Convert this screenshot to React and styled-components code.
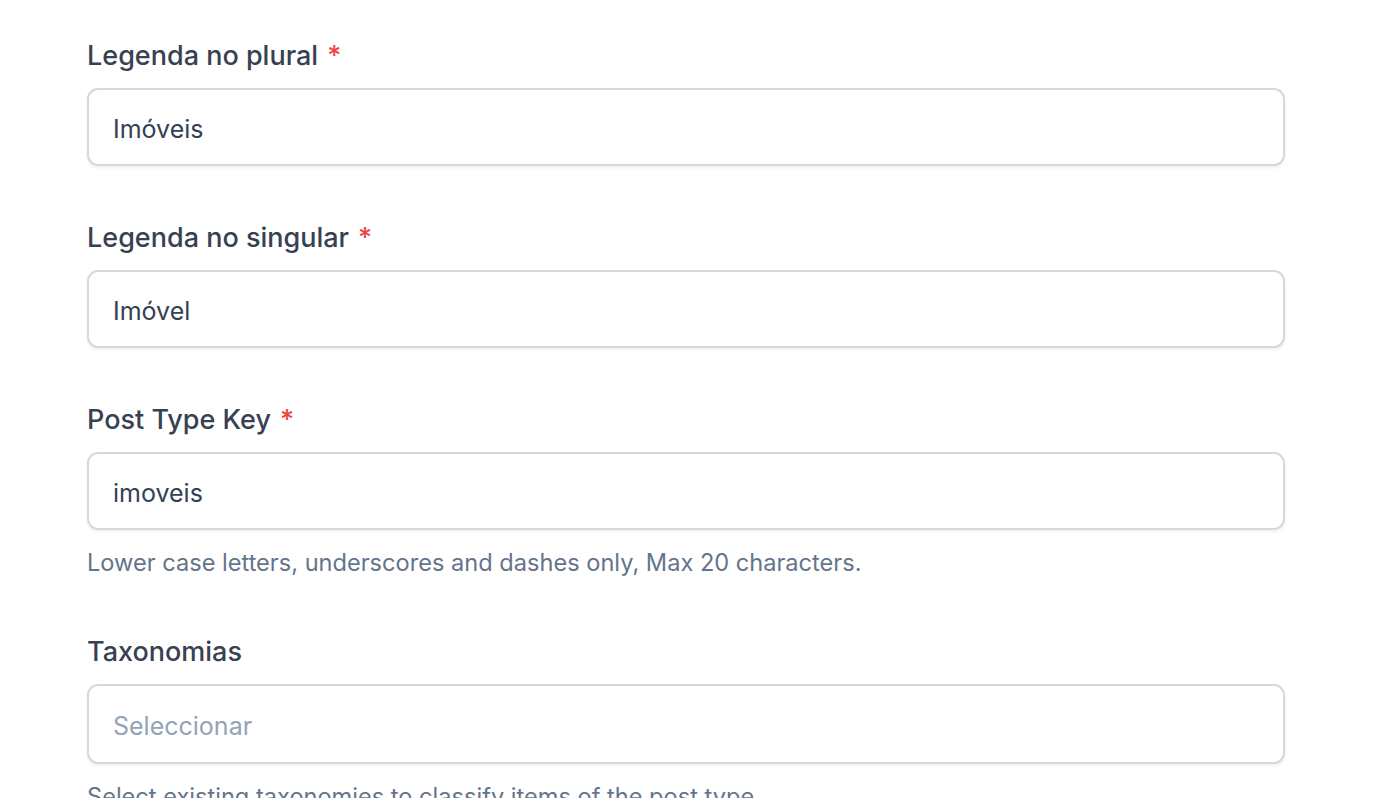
import React from "react";
import styled, { createGlobalStyle } from "styled-components";

const Global = createGlobalStyle`
  html, body { margin: 0; padding: 0; background: #fff; }
  body { font-family: Inter, "Noto Sans", sans-serif; -webkit-font-smoothing: antialiased; }
  * { box-sizing: border-box; }
`;

const Form = styled.div`
  width: 1198px;
  margin-left: 87px;
  padding-top: 38px;
  display: flex;
  flex-direction: column;
  gap: 54px;
`;

const Field = styled.div`
  display: flex;
  flex-direction: column;
`;

const Label = styled.label`
  font-size: 27px;
  line-height: 35px;
  font-weight: 500;
  color: #374151;
  margin-bottom: 15px;
`;

const Required = styled.span`
  color: #ef4444;
  margin-left: 9px;
`;

const Input = styled.div`
  height: ${(p) => p.$h || 78}px;
  border: 2px solid #d5d8de;
  border-radius: 11px;
  box-shadow: 0 2px 3px rgba(0, 0, 0, 0.06);
  display: flex;
  align-items: center;
  padding: 3px 24px 0;
  font-size: 25px;
  color: ${(p) => (p.$placeholder ? "#94a3b8" : "#334155")};
`;

const Help = styled.p`
  margin: 15px 0 0;
  font-size: 23.6px;
  line-height: 35px;
  color: #64748b;
`;

export default function App() {
  return (
    <>
      <Global />
      <Form>
        <Field>
          <Label>
            Legenda no plural<Required>*</Required>
          </Label>
          <Input>Imóveis</Input>
        </Field>
        <Field>
          <Label>
            Legenda no singular<Required>*</Required>
          </Label>
          <Input>Imóvel</Input>
        </Field>
        <Field>
          <Label>
            Post Type Key<Required>*</Required>
          </Label>
          <Input>imoveis</Input>
          <Help>Lower case letters, underscores and dashes only, Max 20 characters.</Help>
        </Field>
        <Field>
          <Label>Taxonomias</Label>
          <Input $h={80} $placeholder>Seleccionar</Input>
          <Help>Select existing taxonomies to classify items of the post type.</Help>
        </Field>
      </Form>
    </>
  );
}
